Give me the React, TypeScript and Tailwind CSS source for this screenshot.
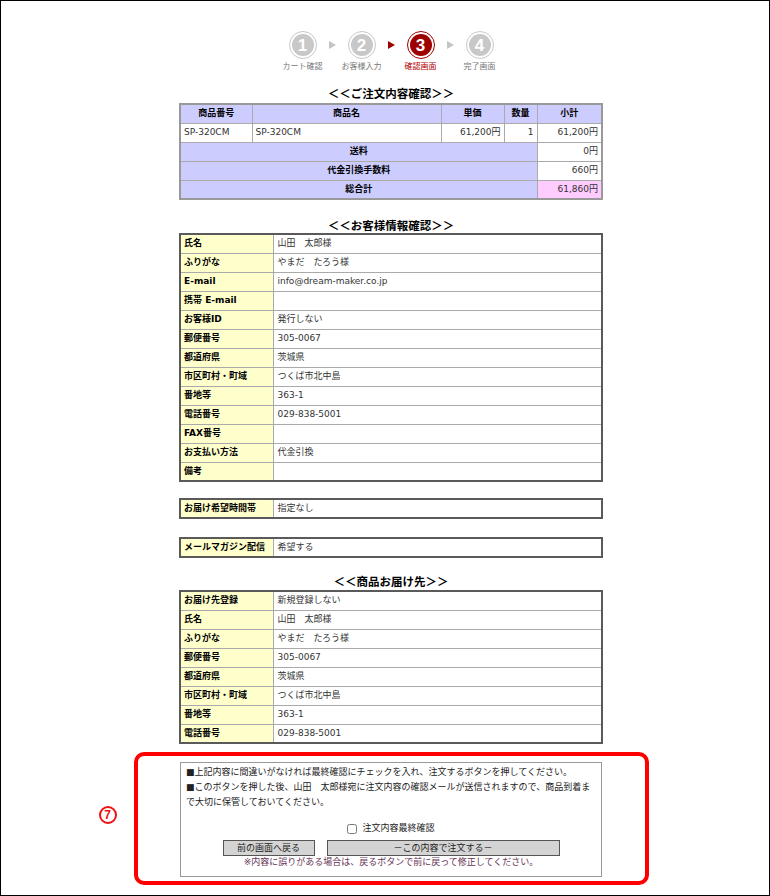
import React from "react";

const cell = "border border-[#aaaaaa] px-[3px] h-[19px] text-[9px] leading-none align-middle";
const lab = "border border-[#aaaaaa] px-[3px] h-[19px] text-[9px] leading-none align-middle bg-[#ffffcc] font-bold text-black";
const val = "border border-[#aaaaaa] px-[4px] h-[19px] text-[9px] leading-none align-middle bg-white text-[#333333]";

function Step({ n, label, active }: { n: number; label: string; active?: boolean }) {
  return (
    <div className="flex flex-col items-center w-[44px]">
      <div
        className={
          active
            ? "w-[28px] h-[28px] rounded-full border border-[#a00000] p-[2px] bg-white"
            : "w-[28px] h-[28px] rounded-full border border-[#c8c8c8] p-[2px] bg-white"
        }
      >
        <div
          className={
            active
              ? "w-full h-full rounded-full bg-[#9c0000] flex items-center justify-center text-white font-bold text-[17px] leading-none font-['Liberation_Sans',Arial,sans-serif]"
              : "w-full h-full rounded-full bg-[#c8c8c8] flex items-center justify-center text-white font-bold text-[17px] leading-none font-['Liberation_Sans',Arial,sans-serif]"
          }
        >
          {n}
        </div>
      </div>
      <div
        className={
          active
            ? "mt-[3px] text-[8px] leading-[10px] whitespace-nowrap text-[#b00000]"
            : "mt-[3px] text-[8px] leading-[10px] whitespace-nowrap text-[#777777]"
        }
      >
        {label}
      </div>
    </div>
  );
}

function Arrow({ active }: { active?: boolean }) {
  return (
    <div className="w-[15px] h-[28px] flex items-center justify-center">
      <svg width="7" height="8" viewBox="0 0 7 8">
        <polygon points="0,0 7,4 0,8" fill={active ? "#a00000" : "#c4c4c4"} />
      </svg>
    </div>
  );
}

function InfoTable({ rows, className }: { rows: [string, string][]; className?: string }) {
  return (
    <table className={"w-[422px] table-fixed border-collapse border-2 border-[#5a5a5a] " + (className ?? "")}>
      <colgroup>
        <col className="w-[93px]" />
        <col className="w-[329px]" />
      </colgroup>
      <tbody>
        {rows.map(([k, v], i) => (
          <tr key={i}>
            <td className={lab}>{k}</td>
            <td className={val}>{v}</td>
          </tr>
        ))}
      </tbody>
    </table>
  );
}

export default function App() {
  const customer: [string, string][] = [
    ["氏名", "山田　太郎様"],
    ["ふりがな", "やまだ　たろう様"],
    ["E-mail", "info@dream-maker.co.jp"],
    ["携帯 E-mail", ""],
    ["お客様ID", "発行しない"],
    ["郵便番号", "305-0067"],
    ["都道府県", "茨城県"],
    ["市区町村・町域", "つくば市北中島"],
    ["番地等", "363-1"],
    ["電話番号", "029-838-5001"],
    ["FAX番号", ""],
    ["お支払い方法", "代金引換"],
    ["備考", ""],
  ];
  const delivery: [string, string][] = [
    ["お届け先登録", "新規登録しない"],
    ["氏名", "山田　太郎様"],
    ["ふりがな", "やまだ　たろう様"],
    ["郵便番号", "305-0067"],
    ["都道府県", "茨城県"],
    ["市区町村・町域", "つくば市北中島"],
    ["番地等", "363-1"],
    ["電話番号", "029-838-5001"],
  ];

  return (
    <div className="w-[770px] h-[896px] border border-black bg-white overflow-hidden font-['DejaVu_Sans','Noto_Sans_CJK_JP',sans-serif] text-[#333333]">
      <div className="flex flex-col items-center pl-[12px] pt-[30px]">
        {/* steps */}
        <div className="flex flex-row items-start">
          <Step n={1} label="カート確認" />
          <Arrow />
          <Step n={2} label="お客様入力" />
          <Arrow active />
          <Step n={3} label="確認画面" active />
          <Arrow />
          <Step n={4} label="完了画面" />
        </div>

        {/* order */}
        <div className="mt-[13px] h-[16px] leading-[16px] text-[11.5px] font-bold text-black font-['Noto_Sans_CJK_JP',sans-serif]">
          ＜＜ご注文内容確認＞＞
        </div>
        <table className="mt-[2px] w-[422px] table-fixed border-collapse border-2 border-[#999999]">
          <colgroup>
            <col className="w-[72px]" />
            <col className="w-[189px]" />
            <col className="w-[63px]" />
            <col className="w-[33px]" />
            <col className="w-[65px]" />
          </colgroup>
          <tbody>
            <tr className="bg-[#ccccff] font-bold text-black">
              <td className={cell + " text-center"}>商品番号</td>
              <td className={cell + " text-center"}>商品名</td>
              <td className={cell + " text-center"}>単価</td>
              <td className={cell + " text-center"}>数量</td>
              <td className={cell + " text-center"}>小計</td>
            </tr>
            <tr className="bg-white">
              <td className={cell}>SP-320CM</td>
              <td className={cell}>SP-320CM</td>
              <td className={cell + " text-right"}>61,200円</td>
              <td className={cell + " text-right"}>1</td>
              <td className={cell + " text-right"}>61,200円</td>
            </tr>
            <tr>
              <td colSpan={4} className={cell + " text-center bg-[#ccccff] font-bold text-black"}>送料</td>
              <td className={cell + " text-right bg-white"}>0円</td>
            </tr>
            <tr>
              <td colSpan={4} className={cell + " text-center bg-[#ccccff] font-bold text-black"}>代金引換手数料</td>
              <td className={cell + " text-right bg-white"}>660円</td>
            </tr>
            <tr>
              <td colSpan={4} className={cell + " text-center bg-[#ccccff] font-bold text-black"}>総合計</td>
              <td className={cell + " text-right bg-[#ffccff]"}>61,860円</td>
            </tr>
          </tbody>
        </table>

        {/* customer */}
        <div className="mt-[17px] h-[16px] leading-[16px] text-[11.5px] font-bold text-black font-['Noto_Sans_CJK_JP',sans-serif]">
          ＜＜お客様情報確認＞＞
        </div>
        <InfoTable rows={customer} />

        <InfoTable rows={[["お届け希望時間帯", "指定なし"]]} className="mt-[16px]" />
        <InfoTable rows={[["メールマガジン配信", "希望する"]]} className="mt-[18px]" />

        <div className="mt-[15px] h-[16px] leading-[16px] text-[11.5px] font-bold text-black font-['Noto_Sans_CJK_JP',sans-serif]">
          ＜＜商品お届け先＞＞
        </div>
        <InfoTable rows={delivery} className="mt-[1px]" />

        {/* confirm box */}
        <div className="relative mt-[8px] w-[515px] h-[133px] border-4 border-[#ff0000] rounded-[10px] flex flex-col items-center pt-[6px]">
          <div className="absolute left-[-39px] top-[50px] w-[18px] h-[18px] rounded-full border-2 border-[#ee1111] flex items-center justify-center text-[12px] font-bold leading-none text-[#ee1111] font-['Liberation_Sans',Arial,sans-serif]">
            7
          </div>
          <div className="w-[422px] h-[115px] border border-[#999999] px-[5px] pt-[2px] flex flex-col">
            <div className="text-[9px] leading-[15px] text-[#222222]">
              ■上記内容に間違いがなければ最終確認にチェックを入れ、注文するボタンを押してください。
              <br />
              ■このボタンを押した後、山田　太郎様宛に注文内容の確認メールが送信されますので、商品到着ま
              <br />
              で大切に保管しておいてください。
            </div>
            <div className="mt-[12px] h-[14px] flex items-center justify-center gap-[5px] text-[9px] text-[#222222]">
              <input type="checkbox" className="w-[10px] h-[10px] m-0" />
              <span>注文内容最終確認</span>
            </div>
            <div className="mt-[4px] flex justify-center gap-[12px]">
              <button className="w-[92px] h-[16px] bg-[#d4d4d4] border border-[#555555] text-[9px] leading-none text-[#222222]">
                前の画面へ戻る
              </button>
              <button className="w-[233px] h-[16px] bg-[#d4d4d4] border border-[#555555] text-[9px] leading-none text-[#222222]">
                －この内容で注文する－
              </button>
            </div>
            <div className="h-[12px] leading-[12px] text-center text-[9px] text-[#663355]">
              ※内容に誤りがある場合は、戻るボタンで前に戻って修正してください。
            </div>
          </div>
        </div>
      </div>
    </div>
  );
}
